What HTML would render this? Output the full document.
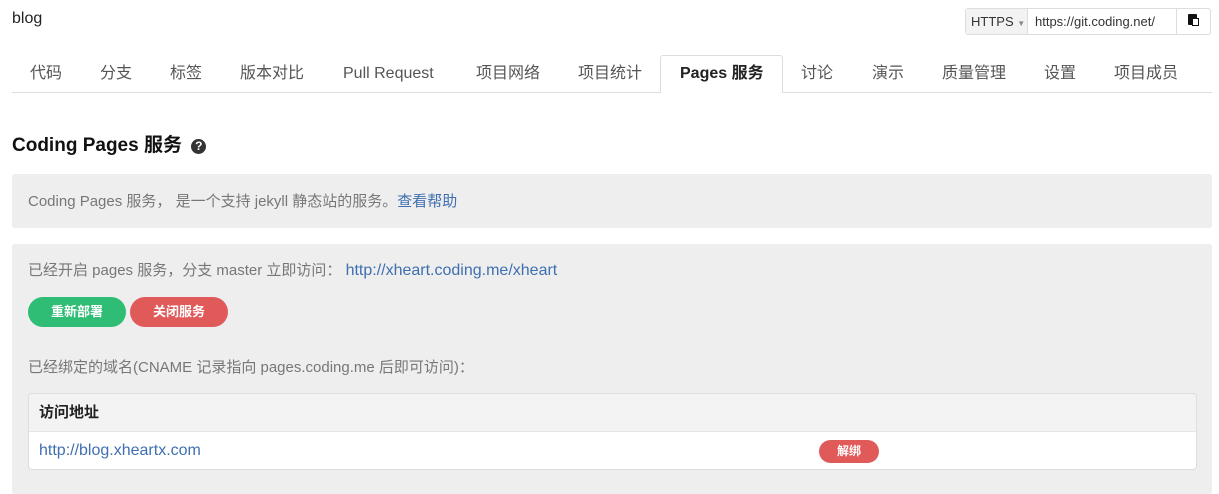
<!DOCTYPE html>
<html><head><meta charset="utf-8"><style>
*{margin:0;padding:0;box-sizing:border-box}
body{width:1219px;height:483px;overflow:hidden;background:#fff;font-family:"Liberation Sans","Noto Sans CJK SC",sans-serif;color:#333;position:relative;font-size:15px}
.a{position:absolute;white-space:nowrap;line-height:20px}
.tab{position:absolute;top:63px;height:22px;line-height:22px;font-size:16px;color:#555;white-space:nowrap}
.g{color:#777}
.lk{color:#3f6fb0}
.btn{position:absolute;top:297px;height:30px;border-radius:15px;color:#fff;font-weight:bold;font-size:13px;text-align:center;line-height:30px}
</style></head><body>
<div class="a" style="left:12px;top:9px;font-size:16px;color:#222">blog</div>
<div class="a" style="left:965px;top:8px;width:246px;height:27px;border:1px solid #ddd;border-radius:3px"></div>
<div class="a" style="left:966px;top:9px;width:62px;height:25px;background:#f3f3f3;border-right:1px solid #ddd;font-size:13px;line-height:25px;padding-left:5px;color:#333">HTTPS <span style="font-size:8px;color:#888">▼</span></div>
<div class="a" style="left:1035px;top:9px;font-size:13px;line-height:25px;color:#333;width:138px;overflow:hidden">https://git.coding.net/</div>
<div class="a" style="left:1176px;top:9px;width:1px;height:25px;background:#ddd"></div>
<div class="a" style="left:1188px;top:14px;width:9px;height:11px;background:#111;border-radius:1px"></div>
<div class="a" style="left:1192px;top:18px;width:7px;height:8px;background:#fff;border:1px solid #111"></div>

<div class="a" style="left:12px;top:92px;width:1200px;height:1px;background:#ddd"></div>
<div class="a" style="left:660px;top:55px;width:123px;height:38px;border:1px solid #ddd;border-bottom:none;background:#fff;border-radius:3px 3px 0 0"></div>
<div class="tab" style="left:30px">代码</div>
<div class="tab" style="left:100px">分支</div>
<div class="tab" style="left:170px">标签</div>
<div class="tab" style="left:240px">版本对比</div>
<div class="tab" style="left:343px;font-family:'Liberation Sans',sans-serif">Pull Request</div>
<div class="tab" style="left:476px">项目网络</div>
<div class="tab" style="left:578px">项目统计</div>
<div class="tab" style="left:680px;color:#222;font-weight:bold">Pages 服务</div>
<div class="tab" style="left:801px">讨论</div>
<div class="tab" style="left:872px">演示</div>
<div class="tab" style="left:942px">质量管理</div>
<div class="tab" style="left:1044px">设置</div>
<div class="tab" style="left:1114px">项目成员</div>

<div class="a" style="left:12px;top:134px;font-size:19px;line-height:24px;font-weight:bold;color:#111">Coding Pages 服务 <span style="display:inline-block;width:15px;height:15px;border-radius:50%;background:#333;color:#fff;font-size:12px;line-height:15px;text-align:center;vertical-align:1px;margin-left:4px">?</span></div>

<div class="a" style="left:12px;top:174px;width:1200px;height:54px;background:#eee;border-radius:3px"></div>
<div class="a g" style="left:28px;top:192px">Coding Pages 服务， 是一个支持 jekyll 静态站的服务。<span class="lk">查看帮助</span></div>

<div class="a" style="left:12px;top:244px;width:1200px;height:250px;background:#eee;border-radius:3px"></div>
<div class="a g" style="left:28px;top:261px">已经开启 pages 服务，分支 master 立即访问： <span class="lk" style="font-size:16px">http://xheart.coding.me/xheart</span></div>
<div class="btn" style="left:28px;width:98px;background:#2fbd75">重新部署</div>
<div class="btn" style="left:130px;width:98px;background:#e05a5a">关闭服务</div>
<div class="a g" style="left:28px;top:358px">已经绑定的域名(CNAME 记录指向 pages.coding.me 后即可访问)：</div>

<div class="a" style="left:28px;top:393px;width:1169px;height:77px;border:1px solid #ddd;border-radius:4px;background:#fff;overflow:hidden">
 <div style="height:38px;background:#f3f3f3;border-bottom:1px solid #e5e5e5;padding:9px 0 0 10px;font-weight:bold;color:#222;line-height:20px">访问地址</div>
 <div style="padding:9px 0 0 10px;font-size:16px;line-height:20px" class="lk">http://blog.xheartx.com</div>
 <div style="position:absolute;left:790px;top:46px;width:60px;height:23px;border-radius:12px;background:#e05a5a;color:#fff;font-size:12px;font-weight:bold;text-align:center;line-height:23px">解绑</div>
</div>
</body></html>
